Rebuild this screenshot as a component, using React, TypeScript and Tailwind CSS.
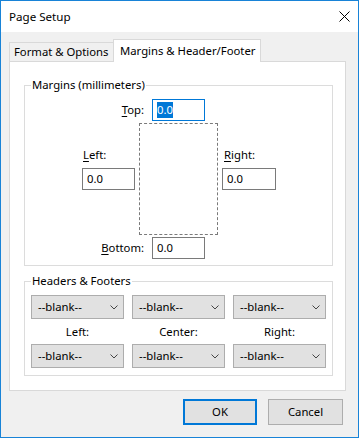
import type { ReactNode } from "react";

function Field({ value, focused }: { value: string; focused?: boolean }) {
  return (
    <div
      className={`h-[22px] flex items-center pl-[4px] bg-white border ${
        focused ? "border-[#0078d7]" : "border-[#7a7a7a]"
      }`}
    >
      {focused ? (
        <span className="bg-[#0078d7] text-white leading-[16px]">{value}</span>
      ) : (
        <span className="leading-[16px]">{value}</span>
      )}
    </div>
  );
}

function Key({ k, rest }: { k: string; rest: string }) {
  return (
    <span>
      <span className="underline underline-offset-2">{k}</span>
      {rest}
    </span>
  );
}

function Select() {
  return (
    <div className="h-[24px] flex items-center justify-between pl-[6px] pr-[5px] bg-[#e1e1e1] border border-[#adadad]">
      <span className="leading-[16px]">--blank--</span>
      <svg width="8" height="5" viewBox="0 0 8 5" fill="none">
        <path d="M0.5 0.5 L4 4 L7.5 0.5" stroke="#444" strokeWidth="1" />
      </svg>
    </div>
  );
}

function Group({ title, children }: { title: string; children: ReactNode }) {
  return (
    <div className="ml-[14px] w-[309px] border border-[#dcdcdc]">
      <div className="-mt-[9px] ml-[6px] px-[1px] w-fit bg-white leading-[16px] whitespace-nowrap">{title}</div>
      {children}
    </div>
  );
}

export default function App() {
  return (
    <div className="w-[359px] h-[438px] border border-[#1883d7] bg-[#f0f0f0] flex flex-col text-[11.3px] text-black font-['Noto_Sans',sans-serif]">
      <div className="h-[31px] bg-white flex items-center justify-between pl-[8px] pr-[8px]">
        <span className="leading-[16px] text-[11.6px]">Page Setup</span>
        <svg width="11" height="11" viewBox="0 0 11 11">
          <path d="M0.5 0.5 L10.5 10.5 M10.5 0.5 L0.5 10.5" stroke="#000" strokeWidth="1" />
        </svg>
      </div>

      <div className="flex flex-col pl-[8px] pr-[12px]">
        <div className="mt-[7px] flex items-end h-[22px]">
          <div className="h-[19px] flex items-center pl-[4px] border border-r-0 border-b-0 border-[#d9d9d9] leading-[16px] w-[104px] whitespace-nowrap">
            Format &amp; Options
          </div>
          <div className="relative z-10 -mb-px h-[23px] flex items-center pl-[6px] bg-white border border-b-0 border-[#d9d9d9] leading-[16px] w-[148px] whitespace-nowrap">
            Margins &amp; Header/Footer
          </div>
        </div>

        <div className="h-[330px] bg-white border border-[#d9d9d9] pt-[23px]">
          <Group title="Margins (millimeters)">
            <div className="mt-[6px] flex items-center">
              <div className="w-[119px] text-right leading-[16px]">
                <Key k="T" rest="op:" />
              </div>
              <div className="ml-[8px] w-[53px]">
                <Field value="0.0" focused />
              </div>
            </div>

            <div className="mt-[2px] flex h-[112px]">
              <div className="ml-[57px] w-[53px] flex flex-col pt-[24px]">
                <div className="leading-[16px] pl-[1px]">
                  <Key k="L" rest="eft:" />
                </div>
                <div className="mt-[5px]">
                  <Field value="0.0" />
                </div>
              </div>
              <div className="ml-[4px] w-[79px] h-[112px] border border-dashed border-[#7a7a7a]" />
              <div className="ml-[4px] w-[54px] flex flex-col pt-[24px]">
                <div className="leading-[16px] pl-[2px]">
                  <Key k="R" rest="ight:" />
                </div>
                <div className="mt-[5px]">
                  <Field value="0.0" />
                </div>
              </div>
            </div>

            <div className="mt-[2px] mb-[6px] flex items-center">
              <div className="w-[119px] text-right leading-[16px]">
                <Key k="B" rest="ottom:" />
              </div>
              <div className="ml-[8px] w-[53px]">
                <Field value="0.0" />
              </div>
            </div>
          </Group>

          <div className="mt-[15px]">
            <Group title="Headers & Footers">
              <div className="mt-[6px] px-[6px] grid grid-cols-3 gap-x-[8px]">
                <Select />
                <Select />
                <Select />
                <div className="mt-[5px] mb-[4px] text-center leading-[16px]">Left:</div>
                <div className="mt-[5px] mb-[4px] text-center leading-[16px]">Center:</div>
                <div className="mt-[5px] mb-[4px] text-center leading-[16px]">Right:</div>
                <Select />
                <Select />
                <Select />
              </div>
              <div className="h-[7px]" />
            </Group>
          </div>
        </div>

        <div className="mt-[8px] mr-[3px] flex justify-end gap-[11px]">
          <button className="w-[74px] h-[26px] bg-[#e1e1e1] border-2 border-[#0078d7] leading-[16px]">
            OK
          </button>
          <button className="w-[75px] h-[26px] bg-[#e1e1e1] border border-[#adadad] leading-[16px]">
            Cancel
          </button>
        </div>
      </div>
    </div>
  );
}
